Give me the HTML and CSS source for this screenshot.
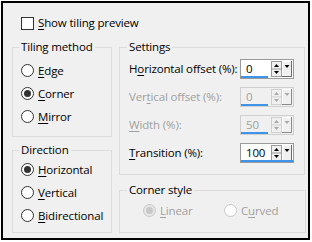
FILE: index.html
```html
<!DOCTYPE html>
<html lang="en">
<head>
  <meta charset="UTF-8">
  <title>Tiling</title>
  <link rel="stylesheet" href="styles.css">
</head>
<body>
  <div class="dialog">
    <div class="check-row">
      <span class="checkbox"></span>
      <span><u>S</u>how tiling preview</span>
    </div>

    <div class="cols">
      <!-- left column -->
      <div class="col col-left">
        <fieldset class="group group-tiling">
          <legend>Tiling method</legend>
          <div class="radio-row"><span class="radio"></span><span><u>E</u>dge</span></div>
          <div class="radio-row"><span class="radio checked"></span><span><u>C</u>orner</span></div>
          <div class="radio-row"><span class="radio"></span><span><u>M</u>irror</span></div>
        </fieldset>

        <fieldset class="group group-direction">
          <legend>Direction</legend>
          <div class="radio-row"><span class="radio checked"></span><span><u>H</u>orizontal</span></div>
          <div class="radio-row"><span class="radio"></span><span><u>V</u>ertical</span></div>
          <div class="radio-row"><span class="radio"></span><span><u>B</u>idirectional</span></div>
        </fieldset>
      </div>

      <!-- right column -->
      <div class="col col-right">
        <fieldset class="group group-settings">
          <legend>Settings</legend>
          <div class="field-row">
            <span class="field-label">H<u>o</u>rizontal offset (%):</span>
            <div class="spin">
              <span class="spin-val">0</span>
              <svg class="spin-btns" width="23" height="18" viewBox="0 0 23 18">
                <rect x="1.5" y="1.5" width="10" height="15" fill="#f0f0f0" stroke="#9a9a9a"/>
                <line x1="1.5" y1="9" x2="11.5" y2="9" stroke="#9a9a9a"/>
                <polygon points="4,7 9,7 6.5,4" fill="#000"/>
                <polygon points="4,11 9,11 6.5,14" fill="#000"/>
                <rect x="12" y="1" width="10" height="16" fill="#f0f0f0"/>
                <path d="M12.5 17V1.5H22" fill="none" stroke="#fff"/>
                <path d="M12 16.5H21.5V1" fill="none" stroke="#696969"/>
                <polygon points="14.5,5 19.5,5 17,8" fill="#000"/>
              </svg>
              <span class="spin-line"></span>
            </div>
          </div>
          <div class="field-row disabled">
            <span class="field-label">Ver<u>t</u>ical offset (%):</span>
            <div class="spin">
              <span class="spin-val">0</span>
              <svg class="spin-btns" width="23" height="18" viewBox="0 0 23 18">
                <rect x="1.5" y="1.5" width="10" height="15" fill="#f0f0f0" stroke="#cfcfcf"/>
                <line x1="1.5" y1="9" x2="11.5" y2="9" stroke="#cfcfcf"/>
                <polygon points="4,7 9,7 6.5,4" fill="#a8a8a8"/>
                <polygon points="4,11 9,11 6.5,14" fill="#a8a8a8"/>
                <rect x="12" y="1" width="10" height="16" fill="#f0f0f0"/>
                <path d="M12.5 17V1.5H22" fill="none" stroke="#fff"/>
                <path d="M12 16.5H21.5V1" fill="none" stroke="#8a8a8a"/>
                <polygon points="14.5,5 19.5,5 17,8" fill="#a8a8a8"/>
              </svg>
              <span class="spin-line"></span>
            </div>
          </div>
          <div class="field-row disabled">
            <span class="field-label"><u>W</u>idth (%):</span>
            <div class="spin">
              <span class="spin-val">50</span>
              <svg class="spin-btns" width="23" height="18" viewBox="0 0 23 18">
                <rect x="1.5" y="1.5" width="10" height="15" fill="#f0f0f0" stroke="#cfcfcf"/>
                <line x1="1.5" y1="9" x2="11.5" y2="9" stroke="#cfcfcf"/>
                <polygon points="4,7 9,7 6.5,4" fill="#a8a8a8"/>
                <polygon points="4,11 9,11 6.5,14" fill="#a8a8a8"/>
                <rect x="12" y="1" width="10" height="16" fill="#f0f0f0"/>
                <path d="M12.5 17V1.5H22" fill="none" stroke="#fff"/>
                <path d="M12 16.5H21.5V1" fill="none" stroke="#8a8a8a"/>
                <polygon points="14.5,5 19.5,5 17,8" fill="#a8a8a8"/>
              </svg>
              <span class="spin-line"></span>
            </div>
          </div>
          <div class="field-row">
            <span class="field-label"><u>T</u>ransition (%):</span>
            <div class="spin focused">
              <span class="spin-val">100</span>
              <svg class="spin-btns" width="23" height="18" viewBox="0 0 23 18">
                <rect x="1.5" y="1.5" width="10" height="15" fill="#f0f0f0" stroke="#9a9a9a"/>
                <line x1="1.5" y1="9" x2="11.5" y2="9" stroke="#9a9a9a"/>
                <polygon points="4,7 9,7 6.5,4" fill="#000"/>
                <polygon points="4,11 9,11 6.5,14" fill="#000"/>
                <rect x="12" y="1" width="10" height="16" fill="#f0f0f0"/>
                <path d="M12.5 17V1.5H22" fill="none" stroke="#fff"/>
                <path d="M12 16.5H21.5V1" fill="none" stroke="#696969"/>
                <polygon points="14.5,5 19.5,5 17,8" fill="#000"/>
              </svg>
              <span class="spin-line"></span>
            </div>
          </div>
        </fieldset>

        <fieldset class="group group-corner">
          <legend>Corner style</legend>
          <div class="corner-row disabled">
            <div class="radio-row"><span class="radio checked"></span><span><u>L</u>inear</span></div>
            <div class="radio-row"><span class="radio"></span><span>C<u>u</u>rved</span></div>
          </div>
        </fieldset>
      </div>
    </div>
  </div>
</body>
</html>
```

FILE: styles.css
```css
* {
  margin: 0;
  padding: 0;
  box-sizing: border-box;
}
html, body {
  width: 312px;
  height: 242px;
  background: #fff;
  overflow: hidden;
}
body {
  font-family: "Open Sans", "Noto Sans", sans-serif;
  font-size: 11.5px;
  line-height: 16px;
  letter-spacing: -0.15px;
  color: #000;
}
u {
  text-underline-offset: 2px;
}

/* Outer frame */
.dialog {
  margin: 1px 0 0 1px;
  width: 309px;
  height: 239px;
  border: 2px solid #000;
  background: #f0f0f0;
  padding: 12px 0 0 9px;
}

.check-row {
  display: flex;
  align-items: center;
  gap: 4px;
  margin-left: 9px;
  height: 16px;
}
.checkbox {
  width: 13px;
  height: 13px;
  border: 1px solid #333;
  background: #fff;
}

.cols {
  display: flex;
  gap: 7px;
  margin-top: 8px;
}
.col {
  display: flex;
  flex-direction: column;
}
.col-left {
  width: 100px;
  gap: 5px;
}
.col-right {
  width: 186px;
  gap: 7px;
}

/* Group boxes */
.group {
  border: 1px solid #dcdcdc;
  padding: 0 8px;
}
.group legend {
  padding: 0 2px;
  margin-left: -2px;
  line-height: 16px;
}
.group-tiling {
  height: 98px;
  padding-top: 4px;
}
.group-direction {
  height: 91px;
}
.group-settings {
  height: 136px;
  padding: 0 10px 0 9px;
}
.group-corner {
  height: 51px;
  padding: 1px 0 0 23px;
}
.group-corner legend {
  margin-left: -16px;
}

/* Radios */
.radio-row {
  display: flex;
  align-items: center;
  gap: 4px;
  height: 23px;
  white-space: nowrap;
}
.radio {
  flex: none;
  width: 13px;
  height: 13px;
  border: 1px solid #333;
  border-radius: 50%;
  background: #fff;
  display: flex;
  align-items: center;
  justify-content: center;
}
.radio.checked::after {
  content: "";
  width: 7px;
  height: 7px;
  border-radius: 50%;
  background: #333;
}
.corner-row {
  display: flex;
}
.corner-row .radio-row {
  width: 81px;
}
.disabled {
  color: #a0a0a0;
}
.corner-row .radio {
  border-color: #c8c8c8;
  background: #fff;
}
.corner-row .radio.checked {
  background: #e6e6e6;
}
.corner-row .radio.checked::after {
  background: #c8c8c8;
}

/* Spin fields */
.field-row {
  display: flex;
  align-items: center;
  justify-content: space-between;
  height: 28px;
}
.field-label {
  white-space: nowrap;
}
.spin {
  position: relative;
  flex: none;
  display: flex;
  align-items: center;
  width: 54px;
  height: 20px;
  border: 1px solid #9a9a9a;
  background: #fff;
}
.spin-val {
  flex: 1;
  padding-left: 5px;
  line-height: 18px;
}
.spin-btns {
  display: block;
}
.spin-line {
  position: absolute;
  left: 0;
  bottom: 0;
  width: 27px;
  height: 2px;
  background: #3d94e8;
}
.spin.focused .spin-line {
  width: 52px;
}
.disabled .spin {
  border-color: #cfcfcf;
  background: #f0f0f0;
}
```
